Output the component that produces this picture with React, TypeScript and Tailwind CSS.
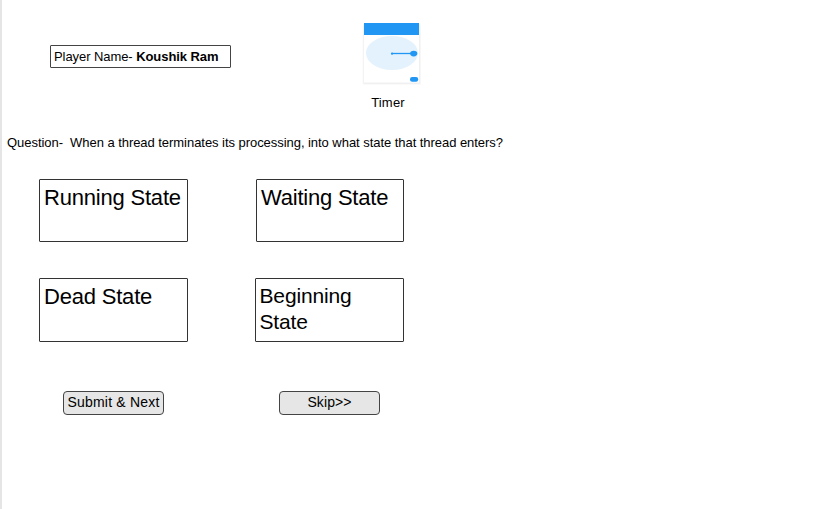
type OptionProps = { label: string; className: string };

function Option({ label, className }: OptionProps) {
  return (
    <button
      type="button"
      className={`block rounded-[1px] border border-[#333] bg-white text-left align-top leading-[26px] text-black ${className}`}
    >
      {label}
    </button>
  );
}

function TimerIcon() {
  return (
    <svg width="64" height="68" viewBox="0 0 64 68" className="block" aria-hidden="true">
      <rect x="2.5" y="5" width="58.5" height="60" rx="1.5" fill="#fafafa" />
      <rect x="3.3" y="4" width="57" height="60" rx="1" fill="#f0f0f0" />
      <rect x="4" y="3" width="55" height="59.5" fill="#fff" />
      <rect x="4" y="3" width="55" height="12" fill="#2196f3" />
      <ellipse cx="32" cy="33" rx="26" ry="17" fill="#e3f2fd" />
      <circle cx="32" cy="33.7" r="1.1" fill="#2196f3" />
      <path d="M32 33.5H53" stroke="#2196f3" strokeWidth="1.3" />
      <ellipse cx="53.7" cy="33.6" rx="3.6" ry="2.8" fill="#2196f3" />
      <rect x="50" y="57" width="8.2" height="4.8" rx="2.2" fill="#2196f3" />
    </svg>
  );
}

export default function App() {
  return (
    <main className="h-[509px] w-[819px] overflow-hidden border-l-2 border-[#e5e5e5] bg-white font-['Liberation_Sans',Arial,sans-serif] text-black">
      <header className="flex h-[134px] items-start">
        <div className="mt-[45px] ml-12 h-[23px] w-[181px] whitespace-pre rounded-[1px] border border-[#444] pl-[3px] text-[13px] leading-[21px] tracking-[-0.07px]">
          Player Name- <strong>Koushik Ram</strong>
        </div>
        <div className="mt-5 ml-[129px] flex w-16 flex-col items-center">
          <TimerIcon />
          <span className="mt-[7px] mr-2 text-[13px] leading-4 tracking-[0.2px]">Timer</span>
        </div>
      </header>
      <p className="h-[45px] whitespace-pre pl-[5px] text-[13px] leading-[17px] tracking-[-0.047px]">
        Question-  When a thread terminates its processing, into what state that thread enters?
      </p>
      <section className="ml-[37px] w-[365px]">
        <div className="flex h-[99px] justify-between">
          <Option label="Running State" className="h-[63px] w-[149px] pb-[25px] pl-[4px] text-[22px] tracking-[-0.2px]" />
          <Option label="Waiting State" className="h-[63px] w-[148px] pb-[25px] pl-[4px] text-[22px] tracking-[-0.22px]" />
        </div>
        <div className="flex h-[113px] justify-between">
          <Option label="Dead State" className="h-[64px] w-[149px] pb-[26px] pl-[4px] text-[22px] tracking-[-0.2px]" />
          <Option label="Beginning State" className="h-[64px] w-[149px] pr-6 pb-[3px] pl-[3.5px] text-[21px] tracking-[-0.15px]" />
        </div>
        <div className="flex justify-between px-6">
          <button type="button" className="h-6 w-[101px] rounded border border-[#444] bg-[#e6e6e6] pb-[2px] text-sm leading-5 tracking-[0.2px] whitespace-nowrap">
            Submit &amp; Next
          </button>
          <button type="button" className="h-6 w-[101px] rounded border border-[#444] bg-[#e6e6e6] pb-[2px] text-sm leading-5 tracking-[0.1px]">
            Skip&gt;&gt;
          </button>
        </div>
      </section>
    </main>
  );
}
